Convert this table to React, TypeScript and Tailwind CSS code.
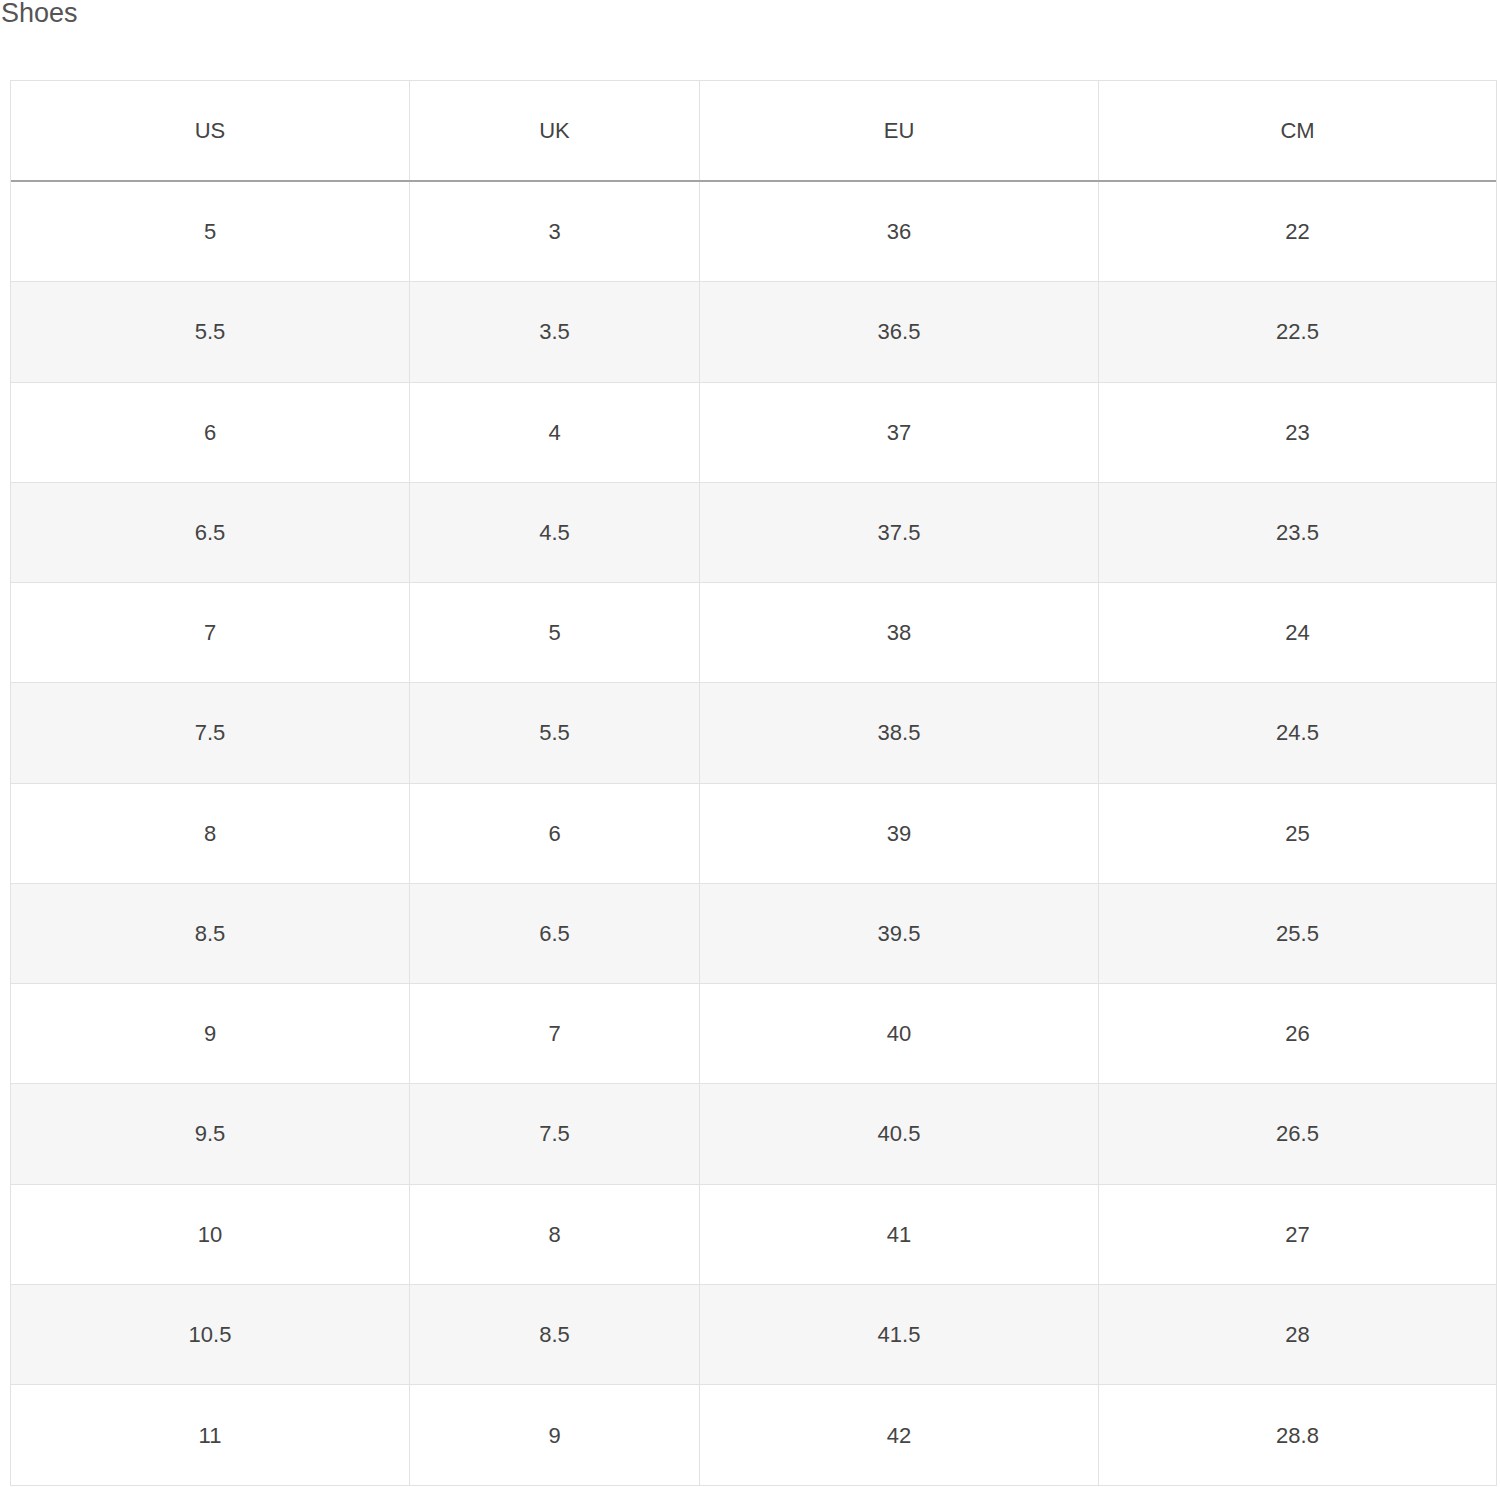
import React from 'react';

const headers = ['US', 'UK', 'EU', 'CM'];

const sizes = [
  ['5', '3', '36', '22'],
  ['5.5', '3.5', '36.5', '22.5'],
  ['6', '4', '37', '23'],
  ['6.5', '4.5', '37.5', '23.5'],
  ['7', '5', '38', '24'],
  ['7.5', '5.5', '38.5', '24.5'],
  ['8', '6', '39', '25'],
  ['8.5', '6.5', '39.5', '25.5'],
  ['9', '7', '40', '26'],
  ['9.5', '7.5', '40.5', '26.5'],
  ['10', '8', '41', '27'],
  ['10.5', '8.5', '41.5', '28'],
  ['11', '9', '42', '28.8'],
];

const SizeChart = () => {
  return (
    <div className="w-[1500px] h-[1487px] bg-white font-['Liberation_Sans',Arial,sans-serif] text-[#444]">
      <h2 className="pl-[1px] text-[27px] leading-none text-[#555] h-[80px]">Shoes</h2>

      <div className="ml-[10px] w-[1487px] border border-[#e2e2e2]">
        {/* header */}
        <div className="grid grid-cols-[399px_290px_399px_397px] h-[101px] border-b-2 border-[#a3a3a3]">
          {headers.map((h, i) => (
            <div
              key={h}
              className={`flex items-center justify-center text-[22px] ${i < 3 ? 'border-r border-[#e2e2e2]' : ''}`}
            >
              {h}
            </div>
          ))}
        </div>

        {/* rows */}
        {sizes.map((row, r) => (
          <div
            key={r}
            className={`grid grid-cols-[399px_290px_399px_397px] h-[100.25px] ${r < sizes.length - 1 ? 'border-b border-[#e2e2e2]' : ''} ${r % 2 === 1 ? 'bg-[#f6f6f6]' : 'bg-white'}`}
          >
            {row.map((v, i) => (
              <div
                key={i}
                className={`flex items-center justify-center text-[22px] ${i < 3 ? 'border-r border-[#e2e2e2]' : ''}`}
              >
                {v}
              </div>
            ))}
          </div>
        ))}
      </div>
    </div>
  );
};

export default function App() {
  return <SizeChart />;
}
